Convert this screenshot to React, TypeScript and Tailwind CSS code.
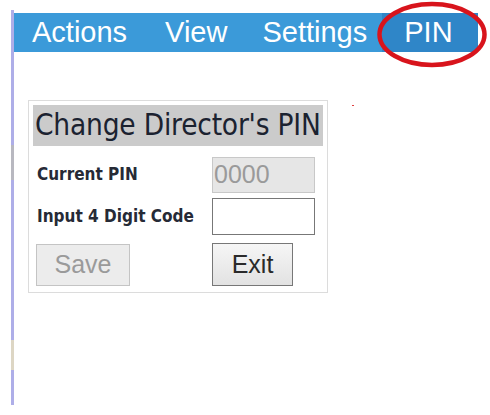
import React from "react";

export default function App() {
  return (
    <div className="relative w-[490px] h-[415px] bg-white overflow-hidden" style={{ fontFamily: '"Liberation Sans", Arial, sans-serif' }}>
      {/* left edge line */}
      <div className="absolute left-[11px] top-[10px] w-[3px] h-[395px] bg-[#aeaee8]" />
      <div className="absolute left-[11px] top-[145px] w-[3px] h-[35px] bg-[#b8b8c0]" />
      <div className="absolute left-[11px] top-[340px] w-[3px] h-[30px] bg-[#ddd6c4]" />
      <div className="pl-[14px] pt-[13px]">
        {/* menu bar */}
        <div className="flex items-center h-[39px] w-[464px] bg-[#3b9ad9] text-white text-[29px] leading-none">
          <span className="ml-[18px]">Actions</span>
          <span className="ml-[38px]">View</span>
          <span className="ml-[35px]">Settings</span>
          <span className="ml-[15px] h-full flex items-center pl-[22px] bg-[#2f86c8] flex-1">PIN</span>
        </div>
        {/* panel */}
        <div className="ml-[14px] mt-[48px] w-[300px] h-[193px] border border-[#dcdcdc] p-[4px]" style={{ fontFamily: 'Tahoma, "DejaVu Sans Condensed", "DejaVu Sans", sans-serif' }}>
          <div className="h-[41px] bg-[#cbcbcb] flex items-center pl-[2px] text-[29.5px] text-[#1b2230] tracking-[-0.2px] whitespace-nowrap overflow-hidden">Change Director's PIN</div>
          <div className="flex items-center h-[43px] mt-[7px]">
            <span className="w-[179px] pl-[4px] text-[17px] text-[#262a36] font-bold">Current PIN</span>
            <div className="w-[103px] h-[36px] bg-[#e6e6e6] border border-[#c8c8c8] flex items-center pl-[1px] text-[25px] text-[#9a9a9a]" style={{ fontFamily: '"Liberation Sans", Arial, sans-serif' }}>0000</div>
          </div>
          <div className="flex items-center h-[37px] mt-[2px]">
            <span className="w-[179px] pl-[4px] text-[17px] text-[#262a36] font-bold whitespace-nowrap">Input 4 Digit Code</span>
            <div className="w-[103px] h-[37px] bg-white border border-[#777777]" />
          </div>
          <div className="flex items-center mt-[8px]" style={{ fontFamily: '"Liberation Sans", Arial, sans-serif' }}>
            <div className="ml-[3px] w-[94px] h-[42px] bg-[#ececec] border border-[#c4c4c4] flex items-center justify-center text-[25px] text-[#9a9a9a]">Save</div>
            <div className="ml-[82px] w-[81px] h-[43px] bg-gradient-to-b from-[#f6f6f6] to-[#e2e2e2] border border-[#777777] flex items-center justify-center text-[25px] text-[#2a2a2a]">Exit</div>
          </div>
        </div>
      </div>
      {/* red ellipse */}
      <svg className="absolute left-[372px] top-[0px]" width="118" height="72" viewBox="0 0 118 72">
        <ellipse cx="60" cy="34.5" rx="52.5" ry="30.5" fill="none" stroke="#d8141c" strokeWidth="4.5" />
      </svg>
      <div className="absolute left-[352px] top-[105px] w-[2px] h-[1px] bg-[#e04040]" />
    </div>
  );
}
